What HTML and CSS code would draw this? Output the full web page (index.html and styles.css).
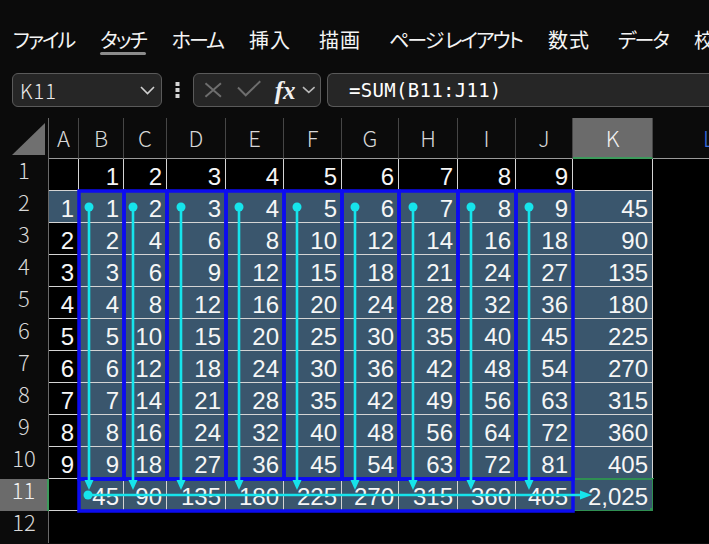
FILE: index.html
```html
<!DOCTYPE html>
<html lang="ja">
<head>
  <meta charset="UTF-8">
  <title>Book1 - Excel</title>
  <link rel="stylesheet" href="styles.css">
</head>
<body>

  <div class="ribbon">
    <span class="tab">ファイル</span>
    <span class="tab active">タッチ</span>
    <span class="tab">ホーム</span>
    <span class="tab kanji">挿入</span>
    <span class="tab kanji">描画</span>
    <span class="tab">ページ レイアウト</span>
    <span class="tab kanji">数式</span>
    <span class="tab">データ</span>
    <span class="tab kanji">校閲</span>
  </div>

  <div class="formula-bar">
    <div class="name-box">
      <span class="name">K11</span>
      <svg class="chevron" width="15" height="9" viewBox="0 0 15 9"><polyline points="1,1 7.5,7.5 14,1"/></svg>
    </div>
    <svg class="grip" width="5" height="16" viewBox="0 0 5 16">
      <rect x="0.5" y="0" width="4" height="4"/>
      <rect x="0.5" y="6" width="4" height="4"/>
      <rect x="0.5" y="12" width="4" height="4"/>
    </svg>
    <div class="fx-box">
      <svg class="btn-icon" width="19" height="16" viewBox="0 0 19 16"><path d="M1.5 1 L17.5 15 M17.5 1 L1.5 15"/></svg>
      <svg class="btn-icon" width="25" height="17" viewBox="0 0 25 17"><path d="M1 7.5 L9 15.5 L24 1"/></svg>
      <span class="fx">fx</span>
      <svg class="chevron small" width="14" height="8" viewBox="0 0 14 8"><polyline points="1,1 7,6.5 13,1"/></svg>
    </div>
    <div class="formula">=SUM(B11:J11)</div>
  </div>

  <div class="sheet">
    <div class="grid" id="grid"></div>
    <svg class="shapes" id="shapes" width="709" height="426"></svg>
  </div>

  <script>
    const colWidths = [49, 30, 45, 43, 59, 58, 58, 57, 59, 58, 57, 80];
    const letters = ['A', 'B', 'C', 'D', 'E', 'F', 'G', 'H', 'I', 'J', 'K', 'L'];
    const headH = 41;
    const rowH = 32;
    const grid = document.getElementById('grid');
    const shapes = document.getElementById('shapes');

    // left edge of every column, row header first
    const lefts = [0];
    colWidths.forEach(w => lefts.push(lefts[lefts.length - 1] + w));
    const rowTop = r => headH + (r - 1) * rowH;

    function addCell(cls, text) {
      const d = document.createElement('div');
      d.className = cls;
      d.textContent = text === undefined ? '' : text;
      grid.appendChild(d);
      return d;
    }

    // header row
    const corner = addCell('corner');
    corner.innerHTML = '<svg width="49" height="41"><polygon points="45,5 45,37 12,37"/></svg>';
    letters.forEach(l => {
      let cls = 'col-head';
      if (l === 'K') cls += ' selected';
      if (l === 'L') cls += ' last';
      addCell(cls, l);
    });

    function valueAt(r, c) {
      // c: 0 = A, 1..9 = B..J, 10 = K
      if (r === 1) return c >= 1 && c <= 9 ? c : '';
      if (r >= 2 && r <= 10) {
        const i = r - 1;
        if (c === 0) return i;
        if (c === 10) return 45 * i;
        return i * c;
      }
      if (r === 11) {
        if (c === 0) return '';
        if (c === 10) return '2,025';
        return 45 * c;
      }
      return '';
    }

    for (let r = 1; r <= 12; r++) {
      addCell(r === 11 ? 'row-head selected' : 'row-head', r);
      for (let c = 0; c <= 11; c++) {
        let cls = 'cell';
        if (r <= 11 && c <= 10) cls += ' box';
        if ((r >= 2 && r <= 11 && c >= 1 && c <= 10) || (r === 2 && c === 0)) cls += ' fill';
        if (r === 11 && c === 10) cls += ' current';
        addCell(cls, c <= 10 ? valueAt(r, c) : '');
      }
    }

    // borders round B2:J10 columns and B11:J11, then the flow arrows
    const ns = 'http://www.w3.org/2000/svg';
    function shape(tag, attrs) {
      const el = document.createElementNS(ns, tag);
      for (const k in attrs) el.setAttribute(k, attrs[k]);
      shapes.appendChild(el);
    }

    for (let c = 2; c <= 10; c++) {
      shape('rect', { x: lefts[c], y: rowTop(2), width: colWidths[c], height: rowTop(11) - rowTop(2), class: 'frame' });
    }
    shape('rect', { x: lefts[2], y: rowTop(11), width: lefts[11] - lefts[2], height: rowH, class: 'frame' });

    const arrowX = [89, 133, 181, 239, 297, 355, 413, 471, 529];
    const startY = rowTop(2) + 16;
    const tipY = rowTop(11) + 11;
    arrowX.forEach(x => {
      shape('circle', { cx: x, cy: startY, r: 4.5, class: 'dot' });
      shape('line', { x1: x, y1: startY, x2: x, y2: tipY - 9, class: 'flow' });
      shape('polygon', { points: `${x - 4.5},${tipY - 10} ${x + 4.5},${tipY - 10} ${x},${tipY}`, class: 'dot' });
    });

    const sumY = rowTop(11) + 16;
    shape('circle', { cx: 88, cy: sumY, r: 4.5, class: 'dot' });
    shape('line', { x1: 88, y1: sumY, x2: 581, y2: sumY, class: 'flow' });
    shape('polygon', { points: `580,${sumY - 4.5} 580,${sumY + 4.5} 592,${sumY}`, class: 'dot' });
  </script>
</body>
</html>
```

FILE: styles.css
```css
body {
  margin: 0;
  width: 709px;
  height: 544px;
  overflow: hidden;
  background: #0b0b0b;
  color: #f2f2f2;
  font-family: "Noto Sans CJK JP", sans-serif;
}

/* ribbon tabs */
.ribbon {
  display: flex;
  gap: 26px;
  height: 62px;
  padding: 26px 0 0 13px;
  box-sizing: border-box;
  white-space: nowrap;
}
.tab {
  position: relative;
  font-size: 20px;
  line-height: 28px;
  font-feature-settings: "palt";
  letter-spacing: -2px;
  color: #f4f4f4;
}
.tab.kanji {
  letter-spacing: 1px;
  margin-right: 2px;
}
.tab.active::after {
  content: "";
  position: absolute;
  left: 0;
  right: 0;
  top: 26px;
  height: 3px;
  border-radius: 2px;
  background: #8c8c8c;
}

/* name box + formula bar */
.formula-bar {
  display: flex;
  align-items: center;
  height: 34px;
  margin-top: 11px;
  padding-left: 12px;
}
.name-box, .fx-box, .formula {
  box-sizing: border-box;
  height: 34px;
  background: #262626;
  border: 1px solid #5a5a5a;
  border-radius: 6px;
  display: flex;
  align-items: center;
}
.name-box {
  width: 150px;
  padding: 0 6px 0 7px;
  justify-content: space-between;
}
.name {
  font-size: 20px;
  font-weight: 300;
  color: #ececec;
  letter-spacing: 1px;
}
.chevron polyline {
  fill: none;
  stroke: #d0d0d0;
  stroke-width: 1.6;
}
.chevron.small polyline {
  stroke: #b8b8b8;
}
.grip {
  margin: 0 13px;
  fill: #d4d4d4;
}
.fx-box {
  width: 128px;
  padding: 0 4px 0 10px;
}
.btn-icon path {
  fill: none;
  stroke: #6e6e6e;
  stroke-width: 2;
}
.btn-icon + .btn-icon {
  margin-left: 15px;
  margin-bottom: 4px;
}
.fx {
  margin-left: 13px;
  font-family: "Liberation Serif", serif;
  font-style: italic;
  font-weight: bold;
  font-size: 25px;
  line-height: 25px;
  color: #f0f0f0;
}
.chevron.small {
  margin-left: 7px;
}
.formula {
  flex: 1;
  margin-left: 6px;
  border-right: none;
  border-radius: 6px 0 0 6px;
  padding-left: 21px;
  font-family: "DejaVu Sans Mono", monospace;
  font-size: 19px;
  letter-spacing: 0.3px;
  color: #ffffff;
}

/* worksheet */
.sheet {
  position: relative;
  margin-top: 11px;
  height: 426px;
  overflow: hidden;
}
.grid {
  display: grid;
  grid-template-columns: 49px 30px 45px 43px 59px 58px 58px 57px 59px 58px 57px 80px 1fr;
  grid-template-rows: 41px repeat(12, 32px);
}
.corner {
  border-right: 1px solid #6a6a6a;
}
.corner polygon {
  fill: #707070;
}
.col-head {
  box-sizing: border-box;
  border-right: 1px solid #464646;
  border-bottom: 1px solid #9a9a9a;
  text-align: center;
  font-size: 22px;
  font-weight: 300;
  line-height: 38px;
  color: #d8d8d8;
}
.col-head.selected {
  background: #6b6b6b;
  color: #f2f2f2;
  border-bottom: 2px solid #3d9a5c;
}
.col-head.last {
  border-right: none;
  text-align: left;
  padding-left: 50px;
  color: #3b6fe0;
}
.row-head {
  box-sizing: border-box;
  border-right: 1px solid #6a6a6a;
  text-align: center;
  font-size: 22px;
  font-weight: 300;
  line-height: 21px;
  color: #d8d8d8;
}
.row-head.selected {
  background: #6b6b6b;
  color: #f2f2f2;
  border-right: 2px solid #3d9a5c;
}
.cell {
  position: relative;
  box-sizing: border-box;
  padding: 3px 5px 0 0;
  text-align: right;
  font-family: "Liberation Sans", Arial, sans-serif;
  font-size: 24px;
  line-height: 29px;
  color: #f6f6f6;
  background: #000;
}
.cell.box {
  box-shadow: inset -1px -1px 0 #d4d4d4;
}
.cell.fill {
  background: #3a566d;
}
.cell.current::before {
  content: "";
  position: absolute;
  left: -1px;
  top: -1px;
  right: -1px;
  bottom: -1px;
  border: 2px solid #2f8f52;
}
.cell.current::after {
  content: "";
  position: absolute;
  right: -4px;
  bottom: -4px;
  width: 7px;
  height: 7px;
  background: #2f8f52;
}

/* drawn shapes over the grid */
.shapes {
  position: absolute;
  left: 0;
  top: 0;
  pointer-events: none;
}
.shapes .frame {
  fill: none;
  stroke: #0c0cf0;
  stroke-width: 3.5;
}
.shapes .flow {
  stroke: #16e4ec;
  stroke-width: 2.6;
}
.shapes .dot {
  fill: #16e4ec;
}
```
